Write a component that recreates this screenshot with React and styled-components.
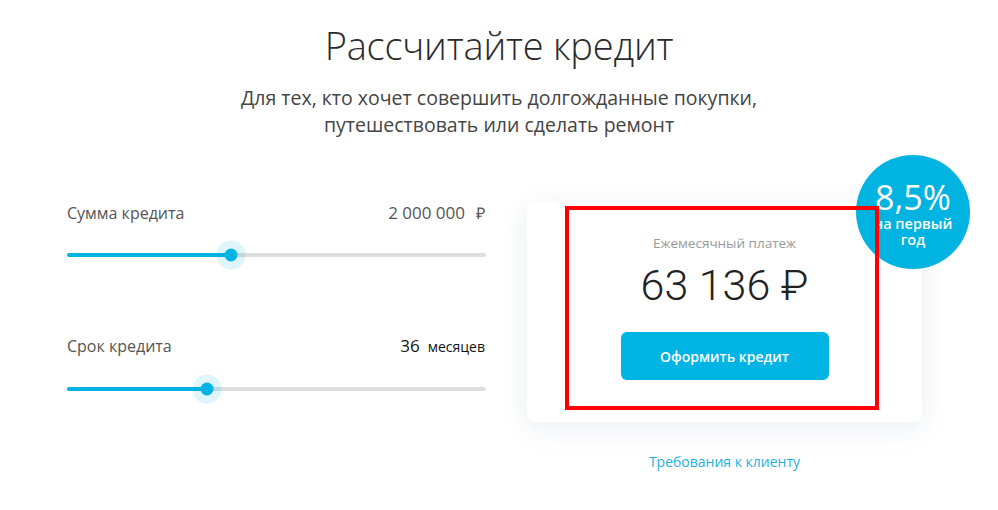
import React from "react";
import styled, { createGlobalStyle } from "styled-components";

const GlobalStyle = createGlobalStyle`
  body {
    margin: 0;
    background: #fff;
    font-family: "Open Sans", "Liberation Sans", sans-serif;
    color: #333;
  }
`;

const Page = styled.div`
  width: 998px;
  height: 510px;
  overflow: hidden;
  padding-top: 19px;
  box-sizing: border-box;
`;

const Title = styled.h1`
  margin: 0;
  text-align: center;
  font-family: "Open Sans", sans-serif;
  font-size: 38px;
  font-weight: 300;
  letter-spacing: -0.2px;
  line-height: 52px;
  color: #2b2b2b;
`;

const Subtitle = styled.p`
  margin: 13px 0 0;
  text-align: center;
  font-size: 19.5px;
  line-height: 27px;
  color: #444;
`;

const Calculator = styled.div`
  display: grid;
  grid-template-columns: 419px 395px;
  column-gap: 41px;
  margin: 70px 0 0 67px;
`;

const Controls = styled.div`
  display: flex;
  flex-direction: column;
  gap: 78px;
  margin-top: -6px;
`;

const Field = styled.div`
  display: flex;
  flex-direction: column;
  gap: 29px;
`;

const FieldHead = styled.div`
  display: flex;
  justify-content: space-between;
  align-items: baseline;
  font-size: 16px;
  color: #555;
  line-height: 22px;
`;

const Value = styled.span`
  color: ${(p) => (p.$dark ? "#111" : "#555")};
  font-size: 17px;
  padding-right: 1px;
`;

const Unit = styled.span`
  font-size: ${(p) => (p.$small ? "14px" : "16px")};
  margin-left: ${(p) => (p.$small ? "8px" : "11px")};
`;

const Track = styled.div`
  position: relative;
  height: 4px;
  border-radius: 2px;
  background: #dedede;
`;

const Fill = styled.div`
  position: absolute;
  left: 0;
  top: 0;
  height: 4px;
  border-radius: 2px;
  background: #00b3e3;
`;

const Thumb = styled.div`
  position: absolute;
  top: 2px;
  width: 13px;
  height: 13px;
  border-radius: 50%;
  background: #00b3e3;
  transform: translate(-50%, -50%);
  box-shadow: 0 0 0 8px rgba(0, 179, 227, 0.13);
`;

const Side = styled.div`
  display: flex;
  flex-direction: column;
  align-items: center;
  margin-top: -6px;
`;

const CardWrap = styled.div`
  position: relative;
  width: 100%;
`;

const Card = styled.div`
  height: 220px;
  box-sizing: border-box;
  background: #fff;
  border-radius: 8px;
  box-shadow: 0 6px 28px rgba(30, 60, 110, 0.09);
  display: flex;
  flex-direction: column;
  align-items: center;
  padding-top: 32px;
`;

const Caption = styled.div`
  font-size: 13.5px;
  color: #999;
  line-height: 18px;
`;

const Amount = styled.div`
  font-family: Roboto, "DejaVu Sans", sans-serif;
  font-size: 43px;
  font-weight: 300;
  color: #222;
  line-height: 56px;
  margin-top: 5px;
`;

const Button = styled.button`
  margin-top: 19px;
  width: 208px;
  height: 48px;
  border: none;
  border-radius: 6px;
  background: #00b4e4;
  color: #fff;
  font-family: "Open Sans", "Liberation Sans", sans-serif;
  font-weight: 600;
  font-size: 14px;
  cursor: pointer;
`;

const Badge = styled.div`
  position: absolute;
  top: -47px;
  right: -48px;
  width: 114px;
  height: 114px;
  border-radius: 50%;
  background: #00b3e0;
  color: #fff;
  display: flex;
  flex-direction: column;
  align-items: center;
  justify-content: center;
  text-align: center;
  padding-top: 4px;
  box-sizing: border-box;
`;

const Rate = styled.div`
  font-size: 34px;
  line-height: 34px;
  margin-bottom: 2px;
`;

const RateNote = styled.div`
  font-size: 14.5px;
  font-weight: 600;
  line-height: 16px;
  width: 80px;
`;

const Highlight = styled.div`
  position: absolute;
  left: 38px;
  top: 4px;
  width: 314px;
  height: 204px;
  border: 4px solid #ff0000;
  box-sizing: border-box;
  pointer-events: none;
`;

const Link = styled.a`
  margin-top: 30px;
  font-size: 14px;
  color: #1fb0e0;
  text-decoration: none;
`;

const Slider = ({ percent }) => (
  <Track>
    <Fill style={{ width: `${percent}%` }} />
    <Thumb style={{ left: `${percent}%` }} />
  </Track>
);

export default function App() {
  return (
    <Page>
      <GlobalStyle />
      <Title>Рассчитайте кредит</Title>
      <Subtitle>
        Для тех, кто хочет совершить долгожданные покупки,
        <br />
        путешествовать или сделать ремонт
      </Subtitle>
      <Calculator>
        <Controls>
          <Field>
            <FieldHead>
              <span>Сумма кредита</span>
              <Value>
                2 000 000<Unit>₽</Unit>
              </Value>
            </FieldHead>
            <Slider percent={39.1} />
          </Field>
          <Field>
            <FieldHead>
              <span>Срок кредита</span>
              <Value $dark>
                36<Unit $small>месяцев</Unit>
              </Value>
            </FieldHead>
            <Slider percent={33.4} />
          </Field>
        </Controls>
        <Side>
          <CardWrap>
            <Card>
              <Caption>Ежемесячный платеж</Caption>
              <Amount>63 136 ₽</Amount>
              <Button>Оформить кредит</Button>
            </Card>
            <Badge>
              <Rate>8,5%</Rate>
              <RateNote>на первый год</RateNote>
            </Badge>
            <Highlight />
          </CardWrap>
          <Link href="#">Требования к клиенту</Link>
        </Side>
      </Calculator>
    </Page>
  );
}
